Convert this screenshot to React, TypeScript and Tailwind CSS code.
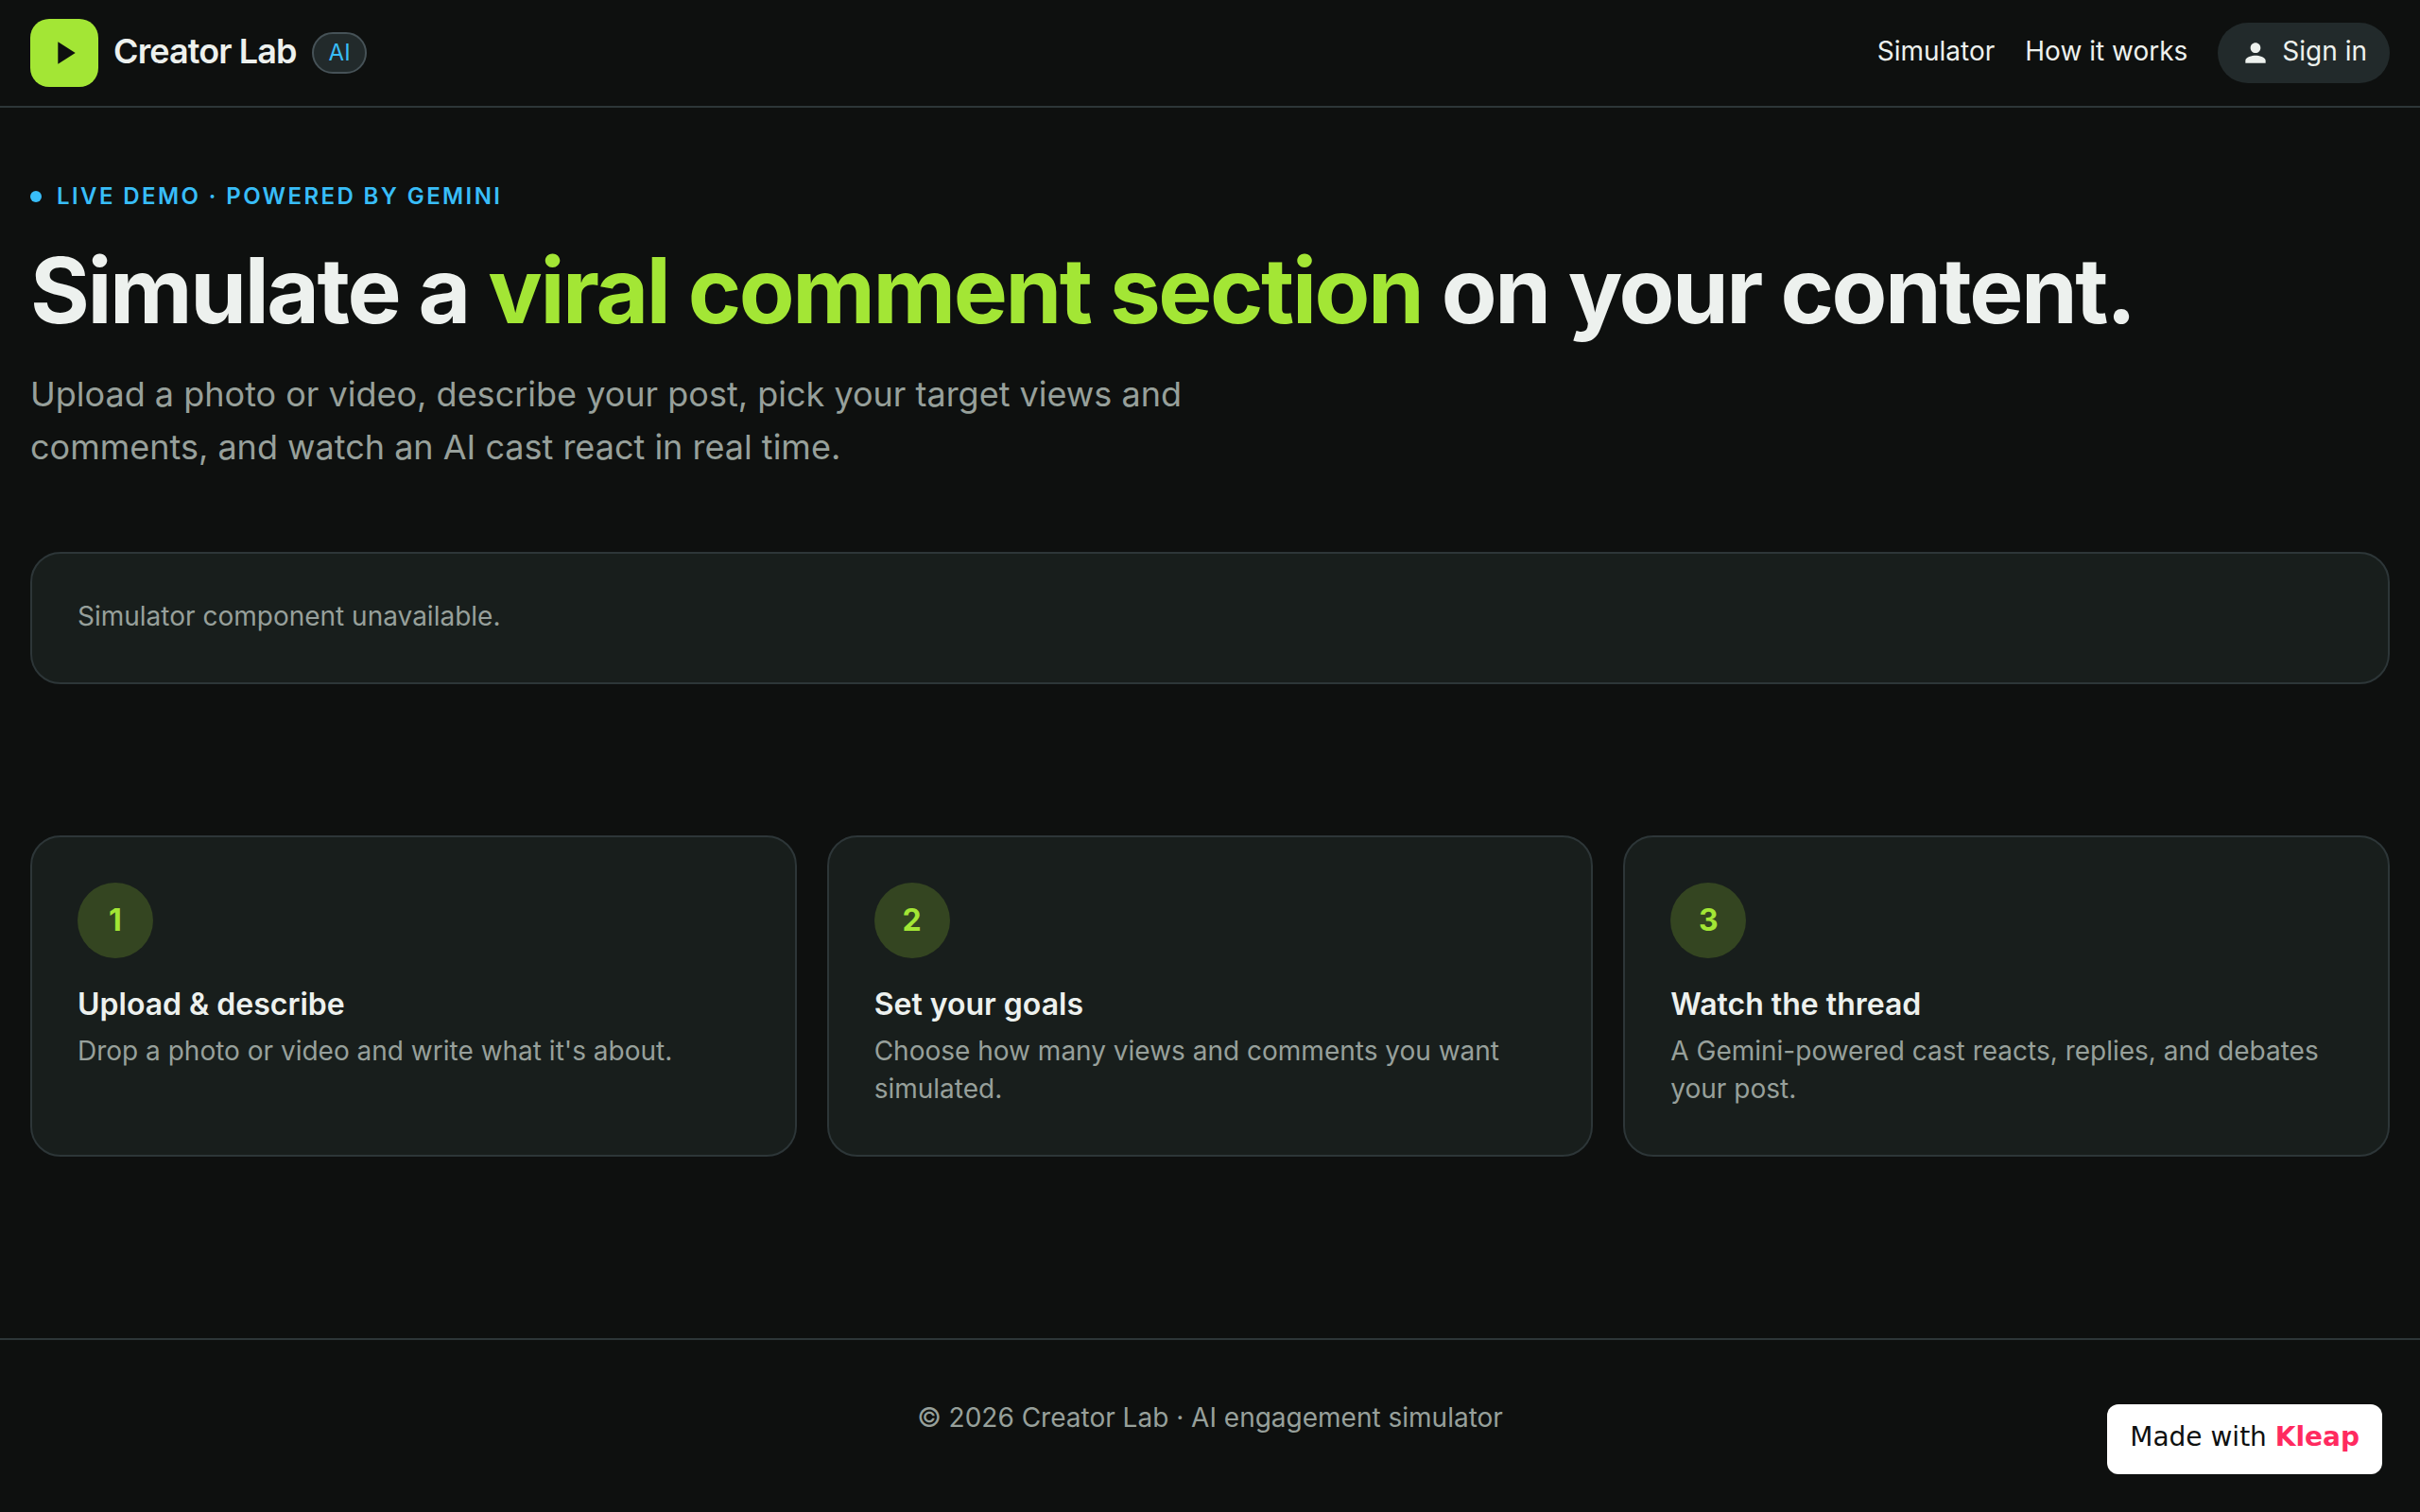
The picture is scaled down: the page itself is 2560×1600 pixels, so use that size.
import { MdPerson, MdPlayArrow } from "react-icons/md";

const steps = [
  { title: "Upload & describe", text: "Drop a photo or video and write what it's about." },
  { title: "Set your goals", text: "Choose how many views and comments you want simulated." },
  { title: "Watch the thread", text: "A Gemini-powered cast reacts, replies, and debates your post." },
];

function Header() {
  return (
    <header className="flex items-center justify-between border-b-2 border-[#2d3638] px-8 py-5">
      <a href="#" className="flex items-center gap-4">
        <span className="flex size-18 items-center justify-center rounded-[20px] bg-[#a3e635]">
          <MdPlayArrow className="size-10 text-[#0e100f]" />
        </span>
        <span className="pb-1 text-4xl font-semibold tracking-tight">Creator Lab</span>
        <span className="flex h-11 items-center rounded-full border-2 border-[#465257] bg-[#222a2b] pr-[15px] pl-4 text-2xl text-[#38bdf8]">
          AI
        </span>
      </a>
      <nav className="flex items-center gap-8 text-[28px] leading-10">
        <a href="#simulator" className="pb-1">
          Simulator
        </a>
        <a href="#how" className="pb-1">
          How it works
        </a>
        <button className="flex h-16 items-center gap-3 rounded-full bg-[#222a2b] px-6">
          <MdPerson className="size-8" />
          <span className="pb-1">Sign in</span>
        </button>
      </nav>
    </header>
  );
}

export default function App() {
  return (
    <div className="min-h-screen bg-[#0e100f] font-['Inter',sans-serif] text-[#edf1ee]">
      <Header />
      <main className="px-8 pt-20 pb-48">
        <section>
          <p className="flex items-center gap-4 text-2xl leading-7 font-semibold tracking-widest text-[#38bdf8] uppercase">
            <span className="size-3 rounded-full bg-[#38bdf8]" />
            Live demo · Powered by Gemini
          </p>
          <h1 className="mt-[35px] text-8xl leading-[100px] font-bold tracking-tight">
            Simulate a <span className="text-[#a3e635]">viral comment section</span> on your content.
          </h1>
          <p className="mt-8 max-w-[1344px] text-4xl leading-14 text-[#97a09b]">
            Upload a photo or video, describe your post, pick your target views and comments, and watch an AI cast
            react in real time.
          </p>
        </section>
        <section
          id="simulator"
          className="mt-[83px] rounded-[32px] border-2 border-[#2d3638] bg-[#181e1c] px-12 pt-[46px] pb-[50px] text-[28px] leading-10 text-[#97a09b]"
        >
          Simulator component unavailable.
        </section>
        <section id="how" className="mt-40 grid grid-cols-3 gap-8">
          {steps.map((step, i) => (
            <article
              key={step.title}
              className="rounded-[32px] border-2 border-[#2d3638] bg-[#181e1c] px-12 pt-12 pb-[50px]"
            >
              <div className="flex size-20 items-center justify-center rounded-full bg-[#344521] text-[32px] font-bold text-[#a3e635]">
                {i + 1}
              </div>
              <h2 className="mt-[25px] text-[32px] leading-12 font-semibold">{step.title}</h2>
              <p className="mt-[5px] text-[28px] leading-10 text-[#97a09b]">{step.text}</p>
            </article>
          ))}
        </section>
      </main>
      <footer className="border-t-2 border-[#2d3638] px-8 pt-[62px] pb-16 text-center text-[28px] leading-10 text-[#97a09b]">
        © 2026 Creator Lab · AI engagement simulator
      </footer>
      <a
        href="#"
        className="fixed right-10 bottom-10 rounded-xl bg-white px-6 pt-3.5 pb-[18px] font-['DejaVu_Sans',sans-serif] text-[28px] leading-[42px] text-[#0e100f]"
      >
        Made with <b className="text-[#ff2a5f]">Kleap</b>
      </a>
    </div>
  );
}
